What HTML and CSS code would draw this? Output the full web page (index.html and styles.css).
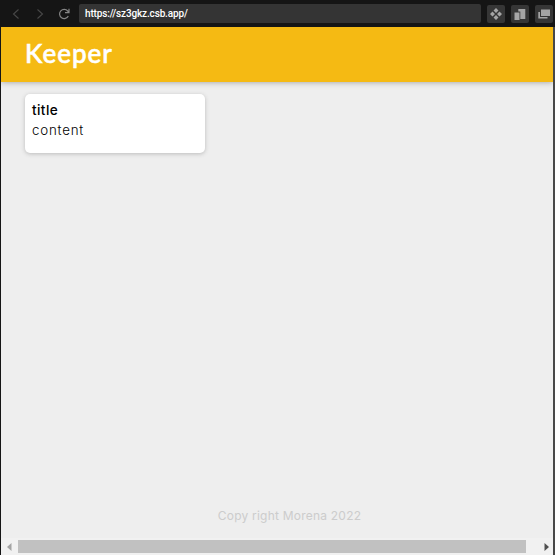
FILE: index.html
```
<!DOCTYPE html>
<html lang="en">
<head>
<meta charset="utf-8">
<title>Keeper</title>
<link rel="stylesheet" href="styles.css">
</head>
<body>
<div class="browser">
  <div class="toolbar">
    <svg class="nav back" width="8" height="12" viewBox="0 0 8 12"><path d="M6.5 1.5 1.5 6l5 4.5"/></svg>
    <svg class="nav forward" width="8" height="12" viewBox="0 0 8 12"><path d="m1.5 1.5 5 4.5-5 4.5"/></svg>
    <svg class="nav reload" width="12" height="12" viewBox="0 0 12 12"><path d="M10.3 8A4.6 4.6 0 1 1 9.7 3l1 1.3M11 .8v3.8H7"/></svg>
    <div class="address"><span>https://sz3gkz.csb.app/</span></div>
    <button class="tool" aria-label="Components"><svg width="12" height="12" viewBox="0 0 12 12"><path d="m6 0 2.500 2.500L6 5 3.500 2.500zM6 7l2.500 2.500L6 12 3.500 9.500zM2.500 3.500 5 6 2.500 8.500 0 6zM9.500 3.500 12 6 9.500 8.500 7 6z"/></svg></button>
    <button class="tool" aria-label="Devices"><svg width="12" height="12" viewBox="0 0 12 12"><path d="M4.300 1h7v10H6.300V3.500h-2zM.5 4.500h5V12h-5z"/></svg></button>
    <button class="tool" aria-label="New window"><svg width="12" height="12" viewBox="0 0 12 12"><path d="M3 1.500h9V8H3zM.3 4h1.700v5h7.500v1.500H.3z"/></svg></button>
  </div>
  <div class="page">
    <header class="header"><h1>Keeper</h1></header>
    <main class="notes">
      <article class="note"><h2>title</h2><p>content</p></article>
    </main>
    <footer class="footer"><p>Copy right Morena 2022</p></footer>
    <div class="scrollbar">
      <svg width="5" height="8" viewBox="0 0 5 8"><path fill="#a3a3a3" d="M4.500 0v8L0 4z"/></svg>
      <div class="thumb"></div>
      <svg width="5" height="8" viewBox="0 0 5 8"><path fill="#505050" d="M.5 0v8L5 4z"/></svg>
    </div>
  </div>
</div>
</body>
</html>
```
FILE: styles.css
```
* { box-sizing: border-box; }
body, h1, h2, p { margin: 0; }
body { overflow: hidden; background: #151515; }
.browser { height: 555px; display: flex; flex-direction: column; }
.toolbar {
  height: 27px;
  flex: none;
  display: flex;
  align-items: center;
  padding-left: 12px;
  background: #151515;
}
.nav { flex: none; fill: none; stroke: #484848; stroke-width: 1.1; }
.forward { margin-left: 16px; }
.reload { margin-left: 14px; stroke: #858585; stroke-width: 1.2; }
.address {
  width: 402px;
  height: 19px;
  flex: none;
  margin-left: 9px;
  padding-left: 6px;
  border-radius: 2px;
  background: #343434;
  color: #fff;
  font: 500 10px/19px Roboto, sans-serif;
  letter-spacing: -0.15px;
}
.tool {
  width: 18px;
  height: 18px;
  flex: none;
  display: grid;
  place-items: center;
  margin: 0 0 0 6px;
  padding: 0;
  border: 0;
  border-radius: 2px;
  background: #363636;
}
.tool svg { fill: #a5a5a5; }
.page {
  flex: 1;
  display: flex;
  flex-direction: column;
  margin: 0 2px 0 1px;
  background: #eee;
  font-family: Inter, sans-serif;
  box-shadow: 2px 0 #484848;
}
.header {
  height: 55px;
  flex: none;
  padding-left: 24px;
  background: #f5ba13;
  box-shadow: 0 0 6px rgba(0, 0, 0, .35);
  clip-path: inset(0 0 -12px 0);
}
.header h1 {
  color: #fff;
  font: 500 26px/53px Lato, sans-serif;
  letter-spacing: 1px;
  -webkit-text-stroke: .6px #fff;
}
.notes { flex: 1; padding: 12px 24px; }
.note {
  width: 180px;
  height: 59px;
  padding: 7px;
  border-radius: 5px;
  background: #fff;
  box-shadow: 0 1px 4px #bbb;
}
.note h2 { font-size: 13.6px; line-height: 19px; font-weight: 500; letter-spacing: .4px; }
.note p { font-size: 13.3px; line-height: 20px; font-weight: 300; letter-spacing: .8px; }
.footer {
  height: 42px;
  padding-left: 25px;
  color: #ccc;
  text-align: center;
  font-size: 12px;
  line-height: 40px;
  letter-spacing: .22px;
}
.scrollbar {
  height: 17px;
  flex: none;
  display: flex;
  align-items: center;
  padding: 0 5px 0 6px;
  background: #f1f1f1;
}
.scrollbar svg { flex: none; }
.thumb { width: 508px; height: 13px; flex: none; margin: 0 18px 0 6px; background: #c1c1c1; }
```
